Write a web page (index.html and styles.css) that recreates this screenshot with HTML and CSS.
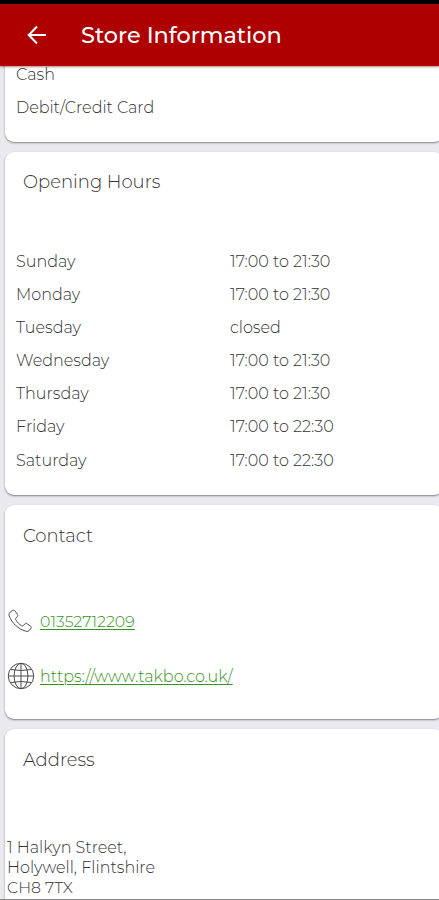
FILE: index.html
```html
<!DOCTYPE html>
<html lang="en">
<head>
<meta charset="utf-8">
<title>Store Information</title>
<link rel="stylesheet" href="styles.css">
</head>
<body>
<div class="screen">
  <header class="app-bar">
    <svg class="back" viewBox="0 0 20 20" aria-hidden="true"><path d="M19 10H2M10 1.5 1.7 10l8.3 8.5"/></svg>
    <h1>Store Information</h1>
  </header>
  <main class="content">
    <section class="card payments">
      <p>Cash</p>
      <p>Debit/Credit Card</p>
    </section>
    <section class="card hours">
      <h2>Opening Hours</h2>
      <dl>
        <dt>Sunday</dt><dd>17:00 to 21:30</dd>
        <dt>Monday</dt><dd>17:00 to 21:30</dd>
        <dt>Tuesday</dt><dd>closed</dd>
        <dt>Wednesday</dt><dd>17:00 to 21:30</dd>
        <dt>Thursday</dt><dd>17:00 to 21:30</dd>
        <dt>Friday</dt><dd>17:00 to 22:30</dd>
        <dt>Saturday</dt><dd>17:00 to 22:30</dd>
      </dl>
    </section>
    <section class="card contact">
      <h2>Contact</h2>
      <div class="link-row phone">
        <svg viewBox="0 0 28 28" aria-hidden="true"><path d="M3.2 5.2 5.6 3.4c.9-.5 1.8-.3 2.4.5l2.5 3.7c.5.8.4 1.5-.3 2.1L9 11c-.6.5-.6 1.1-.2 1.8 1.4 2.5 3.3 4.6 5.9 6 .7.4 1.3.3 1.8-.4l1.3-1.5c.6-.7 1.4-.8 2.1-.3l3.6 2.5c.8.6.9 1.4.3 2.3l-1.2 1.7c-.9 1.2-2.2 1.6-3.8 1.1C10.9 21.8 5 16.2 2.2 8.8c-.5-1.5-.2-2.7 1-3.6Z"/></svg>
        <a>01352712209</a>
      </div>
      <div class="link-row web">
        <svg viewBox="0 0 28 28" aria-hidden="true"><circle cx="14" cy="14" r="12.7"/><ellipse cx="14" cy="14" rx="6.9" ry="12.7"/><path d="M14 1.5v25M1.5 14h25M3.5 7.5q10.5 2 21 0M3.5 20.5q10.5-2 21 0"/></svg>
        <a>https://www.takbo.co.uk/</a>
      </div>
    </section>
    <section class="card address">
      <h2>Address</h2>
      <address>
        <div>1 Halkyn Street,</div>
        <div>Holywell, Flintshire</div>
        <div class="postcode">CH8 7TX</div>
      </address>
    </section>
  </main>
  <div class="bottom-edge"></div>
</div>
</body>
</html>
```
FILE: styles.css
```css
* { box-sizing: border-box; }
body { margin: 0; background: #e9e9ee; }
.screen {
  position: relative;
  display: flex;
  flex-direction: column;
  width: 439px;
  height: 900px;
  overflow: hidden;
  font-family: Montserrat, Inter, sans-serif;
  font-size: 16px;
  font-weight: 300;
  color: #333;
}
.app-bar {
  position: relative;
  z-index: 1;
  flex: none;
  display: flex;
  align-items: center;
  height: 66px;
  padding: 0 0 0 27px;
  border-top: 4px solid #000;
  background: #ae0000;
  box-shadow: 0 1px 2px rgba(120, 0, 0, .5);
  color: #fff;
}
.back { width: 20px; height: 20px; margin-right: 34px; fill: none; stroke: #fff; stroke-width: 2.1; }
h1 { margin: 0; font-size: 22.4px; line-height: 30px; font-weight: 500; }
h2 { margin: 0; padding-left: 18px; font-size: 18px; line-height: 24px; font-weight: 300; }
p { margin: 0; line-height: 33px; }
.content { flex: 1; display: flex; flex-direction: column; gap: 10px; padding-left: 5px; white-space: nowrap; }
.card {
  flex: none;
  width: 438px;
  border-radius: 9px;
  background: #fff;
  box-shadow: 0 1px 2px rgba(0, 0, 0, .45);
}
.payments { height: 85px; margin-top: -9px; padding: 1px 11px 0; border-radius: 0 0 9px 9px; }
.hours { height: 343px; padding-top: 18px; }
dl { display: grid; grid-template-columns: 214px 1fr; grid-auto-rows: 33.1px; margin: 51px 0 0 11px; line-height: 33px; }
dd { margin: 0; }
.contact { height: 214px; padding-top: 19px; }
.link-row { display: flex; align-items: center; height: 28px; padding-left: 2px; gap: 5px; }
.link-row svg { width: 28px; height: 28px; fill: none; stroke: #4c4c4c; stroke-width: 1; }
.link-row a { color: #379322; text-decoration: underline; text-decoration-thickness: 1px; text-underline-offset: 2px; }
.phone { margin-top: 59px; }
.phone a { font-size: 15.8px; }
.web { margin-top: 27px; }
.web a { padding-top: 1px; }
.address { height: 200px; padding-top: 19px; }
address { margin: 66px 0 0 2px; font-style: normal; line-height: 20px; }
.postcode { font-size: 15.8px; }
.bottom-edge { position: absolute; right: 0; bottom: 0; left: 0; height: 1px; background: #888; }
```
